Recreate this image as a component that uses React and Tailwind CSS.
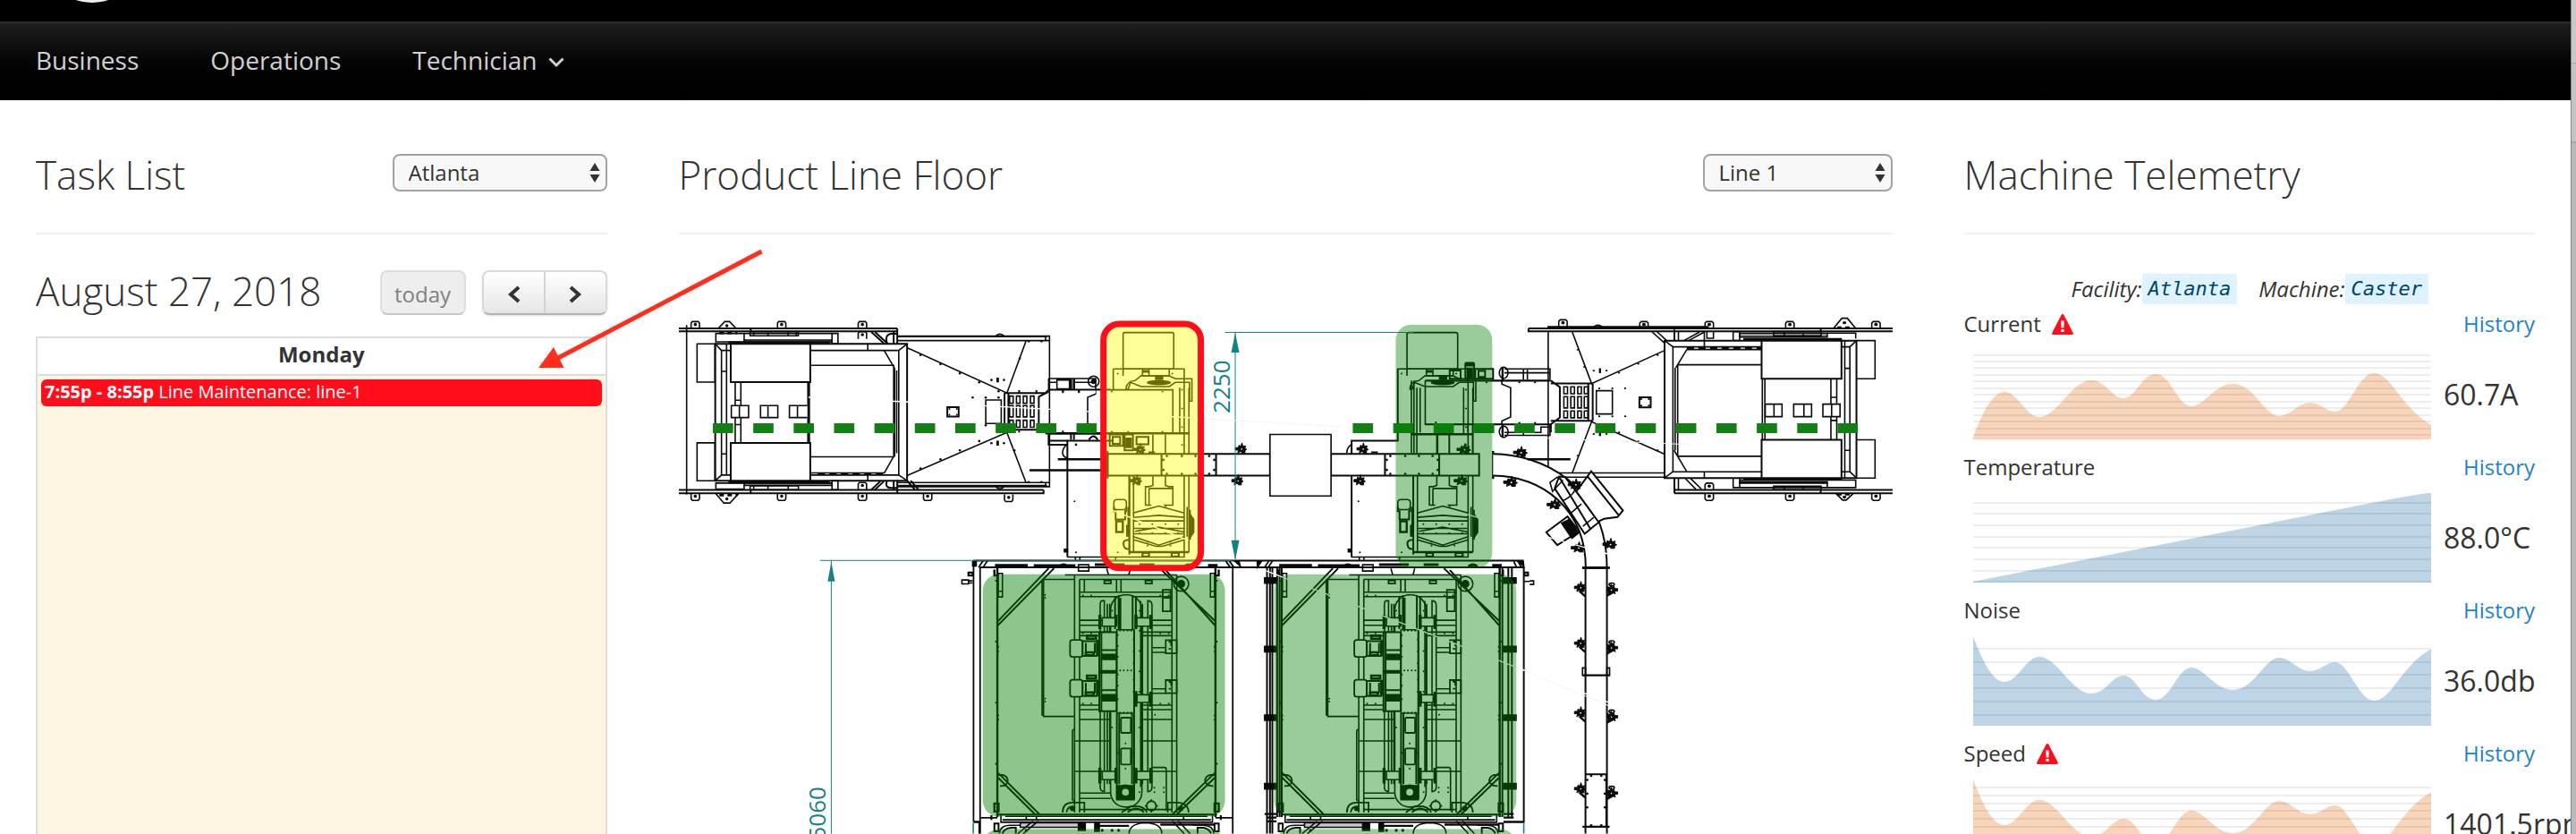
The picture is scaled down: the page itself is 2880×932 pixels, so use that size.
import React from 'react';

const INK = '#0a0a0a';
const TEAL = '#138280';

/* Drawing helpers ------------------------------------------------------- */

function Sheet({ x, y, sx = 3, children }) {
  return (
    <g
      transform={`translate(${x} ${y}) scale(${1 / sx} ${1 / 3})`}
      className="[&_*]:[vector-effect:non-scaling-stroke]"
      fill="none"
      stroke={INK}
      strokeWidth="1.6"
    >
      {children}
    </g>
  );
}

function Dots({ at, r = 3 }) {
  return at.map(([x, y], i) => <circle key={i} cx={x} cy={y} r={r} fill={INK} stroke="none" />);
}

function Boxes({ at, w, h, r = 0, fill = 'none' }) {
  return at.map(([x, y], i) => <rect key={i} x={x} y={y} width={w} height={h} rx={r} fill={fill} />);
}

function Clip({ x, y, flip = 1 }) {
  return (
    <g transform={`translate(${x} ${y}) scale(${flip} 1)`}>
      <path
        d="M-20-4H-10L-8-12L-2-8L2-20L5-8L14-10L12-2L18 2L12 6V14H2L-2 8L-12 14L-10 4H-20Z"
        fill={INK}
        strokeWidth="1"
      />
      <circle cx="1" cy="1" r="2.500" fill="#fff" stroke="none" />
    </g>
  );
}

function Brackets({ at, w = 28, h = 24, flip = false }) {
  return at.map(([x, y], i) => (
    <g key={i}>
      <path
        d={
          flip
            ? `M${x} ${y}V${y + h - 5}L${x + 4} ${y + h}H${x + w - 4}L${x + w} ${y + h - 5}V${y}`
            : `M${x} ${y + h}V${y + 5}L${x + 4} ${y}H${x + w - 4}L${x + w} ${y + 5}V${y + h}`
        }
        fill="#fff"
      />
      <circle cx={x + w / 2} cy={y + h / 2 - 2} r="3" fill={INK} />
    </g>
  ));
}

/* Machine parts --------------------------------------------------------- */

function LeftHopper() {
  return (
    <Sheet x={740} y={340}>
      <Brackets at={[[95, 58], [385, 58], [656, 58], [656, 92]]} />
      <Brackets at={[[95, 634], [385, 634], [656, 634], [875, 634], [1147, 638]]} flip />
      <Brackets at={[[656, 598]]} />
      <path d="M186 81L208 58H224L246 81M178 636L205 667H225L254 636" />
      <Dots at={[[215, 72], [215, 653]]} r={5} />
      <path d="M190 96H250M190 640H250" strokeWidth="3" strokeDasharray="5 4" />
      <path d="M80 70V638" />
      <path d="M54 81H787M54 91H787M54 623H1278M54 634H1278V623M787 81V132M295 81V92M295 623V634" strokeWidth="2" />
      <path d="M274 98H568M274 120H568V126H274ZM274 600H568V608H274Z" fill="#999" />
      <path d="M178 98H273V126H178ZM178 600H273V620H178Z" />
      <path d="M293 92H455V106H293ZM305 92V106M353 92V106M421 92V106M448 92V106M293 609H455V622H293ZM305 609V622M353 609V622M421 609V622M568 98H588V132H568ZM568 592H588V622H568Z" />
      <path d="M700 93L743 132M712 93L755 132M700 622L730 594M712 622L742 594M820 592L846 622M832 592L858 622" strokeWidth="2" />
      <path d="M775 91V132M775 592V622M787 592V634M752 130Q745 102 766 99H787M752 594Q745 616 766 616H787" strokeWidth="2" />
      <path d="M220 128H560M220 598H560" strokeWidth="2.4" />
      <path d="M115 133H175V261H115ZM115 465H175V592H115Z" />
      <rect x="176" y="133" width="644" height="459" strokeWidth="2" />
      <rect x="197" y="155" width="595" height="418" />
      <path d="M214 133V573M197 225H214M197 502H214M176 133L197 155M820 133L792 155M176 592L197 573M820 592L792 573M688 133V155M688 573V592" />
      <path d="M497 205H775V512H497M743 155L778 215M743 567L778 505M778 215V512M785 222V500M497 566H743" />
      <path d="M520 568H740" strokeWidth="2.4" strokeDasharray="8 5" />
      <path d="M228 133H495V261H228ZM228 465H495V592H228Z" fill="#fff" strokeWidth="2" />
      <path d="M487 261V465M492 261V465M243 261V465M262 261V465M243 322H262M243 404H262" />
      <path d="M230 340H288V380H230ZM257 340V380M328 340H386V380H328ZM353 340V380M485 340H425V380H485M452 340V380" fill="#fff" />
      <path d="M787 107H1298V612H787M787 122H1285M787 598H1285M1285 107V122H1298M1285 612V598H1298" />
      <path d="M790 108H1290M790 609H1290" strokeWidth="2" />
      <path d="M820 146L1155 298L1219 124M820 575L1155 430L1219 598" />
      <path d="M1118 106Q1131 94 1145 106M1118 612Q1131 626 1145 612" />
      <Dots
        at={[[865, 170], [932, 201], [997, 232], [1062, 262], [865, 551], [932, 520], [997, 490], [1062, 459], [1198, 182], [1180, 490], [1103, 254], [1145, 254], [1103, 466], [1145, 466], [1084, 313], [1127, 313], [1040, 313], [1127, 292], [1084, 406], [1228, 124], [1271, 124], [1228, 597], [1271, 597]]}
        r={4}
      />
      <path d="M1124 246V262M1124 458V474" strokeWidth="2.8" />
      <rect x="955" y="345" width="38" height="32" strokeWidth="2" />
      <Dots at={[[962, 351], [987, 351], [962, 371], [987, 371]]} />
      <rect x="1084" y="321" width="52" height="79" />
      <path d="M1147 298V430M1160 298V430" strokeWidth="2" />
      <path d="M1147 298H1284L1296 287H1500M1147 421H1262V310L1296 293" strokeWidth="2" />
      <Boxes at={[[1164, 308], [1187, 308], [1210, 308], [1234, 308], [1164, 389], [1187, 389], [1210, 389], [1234, 389]]} w={12} h={24} />
      <Boxes at={[[1164, 340], [1187, 340], [1210, 340], [1234, 340]]} w={12} h={38} />
      <path d="M1295 249H1453V287M1295 249V287M1295 262H1323V284H1365V254H1323V262M1384 262H1450" />
      <path d="M1370 250V287M1380 250V287M1284 433H1500" strokeWidth="2.6" />
      <circle cx="1446" cy="259" r="18" />
      <circle cx="1446" cy="259" r="6" fill={INK} />
      <path d="M1295 436V471H1358M1295 458H1358M1370 436V455M1380 436V455M1430 455Q1446 430 1460 455" strokeWidth="2" />
      <path d="M1455 287V300L1426 312V430" />
      <path d="M1196 288V300M1254 288V300M1343 288V298M1397 288V298M1196 424V430M1343 424V432" strokeWidth="2" />
    </Sheet>
  );
}

function Tower({ shift = 0 }) {
  return (
    <g transform={`translate(${shift} 0)`}>
      <rect x="345" y="95" width="170" height="122" rx="6" />
      <path d="M312 217H550V848H158M366 577V830H566V280M380 577V830M535 280V433M320 848V858M185 848V858M200 848V858" />
      <path d="M410 217V240M432 217V240M405 240H500V217M345 217V240" />
      <path d="M355 285Q355 258 385 256L405 240H500L520 250H576V325H568V262H520L500 276H405L370 262L362 285Z" />
      <ellipse cx="465" cy="263" rx="38" ry="6" fill={INK} />
      <path d="M452 243H480M452 250H480M410 225H430" strokeWidth="3" />
      <path d="M445 437V502M487 437V502M445 577V608L432 612H420V674H440M487 577V608L498 612H512V674H485L490 680M432 618H512M432 618V674" />
      <path d="M380 700L465 677L550 700M380 715L465 708L550 715M380 727H550M380 752H550M385 762L465 748L550 764M380 770H550M380 780L465 808L550 780M380 790L455 812H478L550 790" />
      <path d="M362 680V780M560 680V780M570 690V790" />
      <path d="M572 708L582 722V765L572 780Z" fill={INK} />
      <path d="M358 740V780M366 577V840" strokeWidth="2" />
      <rect x="314" y="655" width="42" height="34" rx="10" />
      <path d="M314 680V694H320V722H352V694H356V680" strokeWidth="2" />
      <path d="M322 728H344V764H322Z" strokeWidth="2.4" />
      <path d="M366 790Q340 790 348 812Q352 824 366 820" strokeWidth="2" />
      <path d="M366 832H566M410 834H432V846H410ZM508 834H532V846H508Z" strokeWidth="2.2" />
      <path d="M148 822H158V831H148Z" fill={INK} />
      <Dots at={[[327, 233], [510, 233], [543, 287], [543, 350], [543, 412], [543, 472], [327, 832], [187, 832], [182, 661], [400, 738], [443, 738], [487, 738], [530, 738], [400, 768], [443, 768], [487, 768], [530, 768], [427, 797], [504, 797], [427, 810], [504, 810]]} />
    </g>
  );
}

function Towers() {
  return (
    <Sheet x={1140} y={340}>
      <path d="M158 848V458H312M1112 848V458H1267V217" strokeWidth="2" />
      <path d="M158 470Q142 480 142 498Q142 512 158 516M1112 470Q1096 480 1096 498" />
      <path d="M126 520H280M31 557H280" strokeWidth="2.4" />
      <Dots at={[[187, 471]]} r={4} />
      <Tower />
      <Tower shift={953} />
      <path d="M312 287V217" />
      <path d="M255 287H512V433H255" fill="#fff" />
      <path d="M94 433H566" strokeWidth="2.6" />
      <path d="M300 437H345V475H300ZM310 445H335V468H310ZM350 437H378V490H350ZM390 445H430V470H390Z" strokeWidth="2" />
      <path d="M355 450H372V480H355Z" fill={INK} />
      <Dots at={[[307, 293], [477, 293], [307, 428], [477, 428], [143, 292], [196, 292], [362, 428]]} />
      <Clip x={402} y={487} />
      <Clip x={742} y={485} />
      <Clip x={1150} y={485} />
      <path d="M293 502H838V575H293ZM1043 502H1540V575H1043Z" fill="#fff" strokeWidth="2" />
      <path d="M474 502V575M657 502V575M1224 502V575M1406 502V575M293 492V585" strokeWidth="2" />
      <path d="M430 497H452M1178 497H1200" strokeWidth="2" />
      {[474, 1224].map((x) => (
        <Dots
          key={x}
          at={[[x + 6, 522], [x + 6, 556], [x + 18, 509], [x + 18, 569], [x + 68, 509], [x + 68, 569], [x + 114, 509], [x + 114, 569], [x + 160, 509], [x + 160, 569], [x + 177, 522], [x + 177, 556]]}
          r={4}
        />
      ))}
      <rect x="838" y="437" width="205" height="206" fill="#fff" />
      <Clip x={390} y={592} />
      <Clip x={730} y={592} />
      <Clip x={1140} y={592} />
    </Sheet>
  );
}

function RightHopper() {
  return (
    <Sheet x={1500} y={340} sx={2.45}>
      <Brackets at={[[594, 52], [816, 58], [995, 58], [1216, 58], [1452, 58]]} w={23} />
      <Brackets at={[[995, 634], [1216, 634], [1452, 634]]} w={23} flip />
      <Brackets at={[[995, 600]]} w={23} />
      <path d="M1347 81L1370 47H1385L1408 81M1353 634L1372 657H1382L1402 634M1000 91V114H1018V91" />
      <Dots at={[[1377, 62], [1377, 647]]} r={5} />
      <path d="M1357 78H1400M1357 638H1400" strokeWidth="2.4" strokeDasharray="5 4" />
      <path d="M563 77H1005" strokeWidth="2.6" />
      <path d="M511 81V91H1509M511 81H1509M911 623H1509M911 634H1509M911 85V122M911 583V634M1312 81V91M1312 623V634" strokeWidth="2" />
      <path d="M690 76Q701 64 713 76M565 91V566M631 93L684 266L884 155M631 566L684 394L884 503M565 566H884M600 580H884" />
      <path d="M1090 97H1330V110H1090ZM1090 595H1330V600H1090Z" fill="#999" />
      <path d="M1183 92H1313V106H1183ZM1212 92V106M1264 92V106M1183 610H1313V622H1183ZM1212 610V622M1264 610V622M1072 92H1090V122H1072ZM1072 583H1090V615H1072ZM1330 97H1408V115M1330 615H1408V590H1090M1090 615H1330V598M922 91V122M922 583V622" />
      <path d="M1100 117H1370M1100 587H1370" strokeWidth="2.4" />
      <path d="M850 93L884 130M864 93L890 122M993 93L950 122M980 93L937 122M940 583L970 621M954 583L985 620M993 93V143" />
      <rect x="884" y="122" width="526" height="461" fill="#fff" strokeWidth="2" />
      <rect x="907" y="143" width="485" height="419" />
      <path d="M884 122L907 143M1410 122L1392 143M884 583L907 562M1410 583L1392 562M920 203V510M913 213V490M920 203H1150M920 510H1150M945 152H1150M945 152L915 213M910 490L945 562M993 122V143M993 562V583M1378 122V583M1378 215H1392M1378 490H1392" />
      <path d="M945 148H1150" strokeWidth="2.4" strokeDasharray="8 5" />
      <path d="M1150 122H1369V250H1150ZM1150 455H1369V583H1150Z" fill="#fff" strokeWidth="2" />
      <path d="M1152 250V455M1159 250V455M1340 250V455M1356 250V455M1340 312H1356M1340 390H1356" />
      <path d="M1160 335H1206V377H1160ZM1184 335V377M1238 335H1287V377H1238ZM1266 335V377M1318 335H1365V377H1318ZM1342 335V377" fill="#fff" />
      <path d="M1410 122H1461V250H1410M1410 455H1461V583H1410" />
      <path d="M675 266V391M687 266V391M572 256L597 278V380L572 403M572 266H687M572 391H687" strokeWidth="2" />
      <Boxes at={[[608, 277], [627, 277], [646, 277], [664, 277], [608, 358], [627, 358], [646, 358], [664, 358]]} w={10} h={23} />
      <Boxes at={[[608, 310], [627, 310], [646, 310], [664, 310]]} w={10} h={38} />
      <path d="M228 256H572M228 403H572V430" strokeWidth="2.2" />
      <path d="M228 256V403H440M438 256V268L462 280V378L438 392V403" />
      <path d="M445 217H570V253M445 230H570M497 217V253M508 217V253M445 440H570V403M445 430H545V412H570M497 403V440" />
      <ellipse cx="443" cy="230" rx="12" ry="19" />
      <ellipse cx="443" cy="428" rx="12" ry="19" />
      <path d="M440 210V256M440 403V445" strokeWidth="2.4" />
      <path d="M697 290H741V368H697Z" />
      <path d="M815 312H846V346H815Z" strokeWidth="2" />
      <Dots at={[[820, 318], [841, 318], [820, 340], [841, 340], [690, 223], [725, 223], [690, 435], [725, 435], [741, 282], [776, 282], [705, 282], [741, 376], [776, 376], [705, 376], [759, 230], [812, 200], [865, 170], [759, 430], [812, 460], [865, 490], [646, 152], [664, 210], [646, 508], [257, 262], [396, 262], [257, 396], [486, 262], [529, 262], [486, 398], [529, 398]]} />
      <path d="M707 215V231M707 428V442" strokeWidth="2.4" />
      <path d="M295 222H325V250H295ZM338 200H362V250H338ZM365 217H414V250H365ZM374 224H392V244H374Z" strokeWidth="2" />
      <path d="M340 196H360V206H340ZM343 215H357V245H343Z" fill={INK} />
      <path d="M188 436H358" strokeWidth="2.6" />
      <path d="M205 280V500M214 280V430M190 256V500M197 256V500M262 440V502M294 440V502M358 403V502M345 403V430" />
      <path d="M414 492V586" strokeWidth="2.4" />
      <path d="M414 502C540 502 726 600 726 885L668 885C668 690 550 575 414 575" fill="#fff" strokeWidth="2" />
      <path d="M658 884H734M508 520H626" strokeWidth="2.6" />
      <path d="M583 618L665 770L705 730L612 580L595 578ZM597 583L680 752" fill="#fff" strokeWidth="2" />
      <path d="M570 598L590 580L604 592L577 628ZM604 660Q640 640 642 605M628 700L656 670M660 745L690 715" />
      <path d="M612 580L642 628L683 560L770 692L755 714L718 720L702 729L642 628M672 576L757 706" fill="#fff" strokeWidth="2" />
      <path d="M560 765L618 712L650 762L590 808Z" fill="#fff" strokeWidth="2" />
      <path d="M602 735L622 722L648 768L630 785Z" fill={INK} />
      <Clip x={335} y={487} />
      <Clip x={327} y={592} />
      <Clip x={490} y={497} />
      <Clip x={463} y={597} />
      <Clip x={640} y={605} />
      <Clip x={582} y={672} />
      <Clip x={735} y={805} />
      <Clip x={648} y={817} />
    </Sheet>
  );
}

function CellCore({ shift = 0 }) {
  return (
    <g transform={`translate(${shift} 0)`}>
      <path d="M703 103V940M1435 103V940" strokeWidth="2.4" />
      <path d="M875 106L705 283M893 106L705 297M1248 106L1433 282M1268 112L1433 297M705 792L845 932M705 808L830 932M1433 792L1290 932M1433 808L1305 932" strokeWidth="2" />
      <path d="M706 123H720V202H706ZM1418 123H1432V202H1418ZM706 183H720M1418 183H1432" />
      <path d="M695 96H805M825 97H965M1030 94H1130M1180 94H1230M1410 96H1442M910 100Q925 88 940 100M1330 100Q1345 88 1360 100" strokeWidth="3" />
      <path d="M975 94H1010V115H975ZM1070 106L1076 128M1150 106L1144 128" />
      <path d="M962 143H858V603H962M853 143V598H858M962 128V925M979 143V925M1289 143V925M1305 128V925M930 128H1305M979 143H1289M979 186H1289M979 201H1289M995 143V186M1103 143V186M1118 143V186" />
      <path d="M979 280H1289M979 297H1289M979 320H1289M979 332H1289M979 565H1289M979 580H1289M979 613H1289M962 685H1305M962 787H1305M979 860H1083M979 878H1083M979 915H1289M1222 372H1270M1222 388H1270M1222 510H1270M1222 525H1270M955 648H962M955 885H962M955 648V885" />
      <path d="M1062 147H1084V157H1062ZM1200 147H1222V157H1200ZM1258 178H1284V250H1258ZM1258 205H1284" strokeWidth="1.8" />
      <rect x="1083" y="195" width="105" height="712" rx="50" fill="#fff" />
      <path d="M1055 215Q1048 215 1048 230V840Q1048 855 1062 855V215ZM1208 215V855Q1222 855 1222 840V230Q1222 215 1208 215ZM1072 225V830M1080 225V830M1190 225V830M1184 215V840" />
      <path d="M1098 200V310M1110 196V310M1116 205V310M1157 196V310M1168 200V310M1104 592V882M1112 592V830M1162 312V882M1155 592V830" strokeWidth="2" />
      <path d="M1104 312H1162V592H1104Z" />
      <Dots at={[[1115, 315], [1127, 315], [1140, 315], [1152, 315], [1115, 449], [1127, 449], [1140, 449], [1152, 449], [1115, 590], [1127, 590], [1140, 590], [1152, 590], [1107, 330], [1107, 366], [1107, 403], [1107, 462], [1107, 500], [1107, 545], [1160, 345], [1160, 385], [1160, 425], [1160, 480], [1160, 520], [1133, 693], [1133, 778], [1108, 725], [1160, 725], [1180, 315], [1180, 383], [1180, 452], [1180, 520], [1180, 640], [1088, 640], [1088, 248], [1180, 248], [1180, 857], [1232, 597], [1230, 842], [1262, 842], [1230, 857], [1262, 857]]} />
      <Dots at={[[863, 195], [863, 205], [863, 543], [863, 553], [990, 197], [1018, 197], [1250, 197], [1278, 197], [990, 324], [1018, 324], [1250, 324], [1278, 324], [990, 560], [1018, 560], [1250, 560], [1278, 560], [698, 148], [1440, 148], [698, 352], [1440, 352], [698, 557], [1440, 557], [698, 762], [1440, 762], [706, 370], [706, 385], [706, 600], [706, 614], [1432, 370], [1432, 385], [1432, 600], [1432, 614]]} />
      <Boxes at={[[1055, 272], [1170, 272], [1055, 787], [1170, 787]]} w={46} h={28} fill="#fff" />
      <rect x="1172" y="530" width="40" height="26" fill="#fff" />
      <path d="M1047 262V310M1101 262V300M1168 262V310M1218 262V310M1047 775V828M1101 775V828M1168 775V828M1218 775V828M1168 518V570M1218 520V570" strokeWidth="3.4" />
      <path d="M1045 320H1103V450H1045ZM1052 320V450M1052 380H1103M1045 456H1103V585H1045ZM1052 456V585M1052 515H1103M1052 550H1103" fill="#fff" strokeWidth="2" />
      <path d="M1055 395H1100V412H1055ZM1055 530H1100V546H1055Z" fill={INK} />
      {[346, 480].map((y) => (
        <g key={y}>
          <rect x="947" y={y} width="42" height="57" rx="8" fill="#fff" strokeWidth="1.8" />
          <path d={`M989 ${y + 4}H1037V${y + 54}H989ZM1000 ${y + 10}V${y + 45}M1030 ${y + 10}V${y + 45}`} fill="#fff" strokeWidth="2" />
          <path d={`M1004 ${y - 14}H1034V${y - 4}H1004ZM1000 ${y + 42}H1026V${y + 52}H1000Z`} strokeWidth="2.6" />
          <path d={`M1040 ${y}V${y + 54}`} strokeWidth="3" />
          <path d={`M1268 ${y + 1}H1305V${y + 45}H1268ZM1278 ${y + 8}L1286 ${y + 4}V${y + 20}M1278 ${y + 30}H1286`} strokeWidth="1.8" />
        </g>
      ))}
      <rect x="1118" y="607" width="33" height="51" rx="4" fill="#fff" strokeWidth="1.8" />
      <rect x="1118" y="710" width="33" height="54" rx="4" fill="#fff" strokeWidth="1.8" />
      <path d="M1104 835H1162V882H1104Z" fill={INK} />
      <circle cx="1133" cy="857" r="24" fill={INK} />
      <circle cx="1133" cy="857" r="14" fill="#fff" />
      <path d="M1222 774H1264Q1270 774 1270 782V920" />
      <circle cx="1220" cy="903" r="16" strokeWidth="1.8" />
      <path d="M1198 903H1204M1236 903H1242M1220 881V887M1220 919V925" />
      <circle cx="1320" cy="158" r="25" />
      <circle cx="1320" cy="158" r="11" fill={INK} />
      <path d="M706 800Q735 795 738 818Q735 838 712 836M1433 800Q1402 795 1400 818Q1404 838 1428 836M922 925Q922 892 955 892H995V925M935 925Q937 905 958 905M1275 925V892H1310Q1345 896 1345 925M1120 925L1150 905H1180Q1200 910 1205 925M1140 925Q1170 900 1195 925" strokeWidth="1.8" />
      <Dots at={[[955, 912], [1318, 912]]} r={9} />
      <path d="M693 895H707V922H693ZM1432 895H1446V922H1432ZM693 110V130H706M1446 110V130H1433" strokeWidth="2.4" />
      <path d="M700 932H1440M720 950H1420" strokeWidth="2.2" />
      <path d="M715 930V958H1425V930M730 938H1408M800 937V950M834 937V950M1328 937V950" />
      <path d="M780 960H990V975H780Z" fill="#c9c6d0" />
      <path d="M975 960H998V985H975ZM1030 960H1045V988H1030Z" fill={INK} />
      <path d="M1045 970H1145M1250 966H1430" strokeWidth="2.4" />
      <path d="M840 954L790 996M822 954L772 996M1290 954L1330 996M1310 954L1350 996M1145 996Q1145 962 1200 960Q1255 962 1255 996M710 996Q712 968 745 968H780M1360 968H1395Q1428 970 1430 996" />
      <path d="M720 996Q725 978 750 976H765V996M1375 996V976H1395Q1415 980 1420 996M693 962H707V988H693ZM1432 962H1446V988H1432Z" strokeWidth="2" />
      <Dots at={[[1055, 985], [1088, 985], [1110, 985], [800, 985]]} r={5} />
    </g>
  );
}

function Cells() {
  return (
    <Sheet x={880} y={600}>
      <path d="M623 80H2467L2470 103H645" strokeWidth="2" />
      <path d="M623 80V957M645 103V996M1493 103V996M645 943H703M1435 943H1493" strokeWidth="1.8" />
      <path d="M623 957H643V996" strokeWidth="2.4" />
      <path d="M640 103L655 80M655 103L670 80M1470 82L1485 103M1482 82L1497 103M1600 103L1614 82M1612 103L1626 82M2436 82L2446 103M2450 82L2462 103" strokeWidth="1.8" />
      <path d="M620 84H632V98H620ZM1500 82L1518 98L1514 82ZM1575 82L1590 82L1576 102ZM2452 84H2468V98Z" fill={INK} />
      <path d="M584 145H606V158H584ZM606 148H620M606 155H620M2490 148H2503V160H2490M2470 150H2490" />
      <path d="M606 120H620V130H606ZM2472 120H2484V130H2472ZM683 934V950M1453 934V950" strokeWidth="2.2" />
      <CellCore />
      <CellCore shift={954} />
      <path d="M1608 103V996M1618 103V996M1626 103V996M1642 103V940M1650 103V940M2398 103V940M2418 103V940M2430 103V940M2470 103V960" strokeWidth="2" />
      {[138, 368, 598, 828].map((y) => (
        <path key={y} d={`M1600 ${y}H1640V${y + 18}H1600ZM2402 ${y}H2444V${y + 18}H2402Z`} fill={INK} />
      ))}
      <path d="M1600 930H1640M1608 942H1640M1608 955H1640M2402 930H2436M2402 942H2436M2402 957H2470" strokeWidth="2.4" />
      <path d="M622 960V996M2470 962V996" stroke={TEAL} />
    </Sheet>
  );
}

function Conveyor() {
  const clips = [[1280, 170], [1280, 357], [1280, 590], [1280, 845]];
  const twins = [[1385, 178], [1385, 372], [1385, 604], [1385, 860]];
  return (
    <Sheet x={1340} y={600}>
      <path d="M1297 104V996M1369 104V996M1297 797H1367V973H1297" strokeWidth="2" />
      <path d="M1287 104H1378M1287 465H1378M1287 973H1378" strokeWidth="2.2" />
      <path d="M1287 440H1297V465H1287ZM1369 440H1378V465H1369Z" />
      {clips.map(([x, y]) => (
        <g key={y}>
          <Clip x={x} y={y} />
          <path d={`M${x - 4} ${y + 12}L${x + 16} ${y + 30}`} strokeWidth="2.4" />
        </g>
      ))}
      {twins.map(([x, y]) => (
        <g key={y}>
          <Clip x={x} y={y} flip={-1} />
          <ellipse cx={x} cy={y - 18} rx="9" ry="5" />
          <path d={`M${x - 16} ${y + 20}L${x + 6} ${y + 8}`} strokeWidth="2.4" />
        </g>
      ))}
      <Dots at={[[1316, 802], [1350, 802], [1303, 816], [1362, 816], [1303, 862], [1362, 862], [1303, 908], [1362, 908], [1316, 968], [1350, 968]]} r={4} />
    </Sheet>
  );
}

function Dimensions() {
  return (
    <g stroke={TEAL} strokeWidth="1" fill={TEAL}>
      <path d="M1369 371.500H1580M916 626.500H1378M1380.500 372V625M928.500 627V932" fill="none" />
      <path d="M1380.500 372L1385 394H1376ZM1380.500 626L1385 604H1376ZM928.500 628L932.500 650H924.500Z" stroke="none" />
      <g className="font-['Open_Sans',sans-serif] text-[26px]" stroke="none">
        <text transform="translate(1374 462) rotate(-90)">2250</text>
        <text transform="translate(922 939) rotate(-90)">5060</text>
      </g>
    </g>
  );
}

function FloorPlan() {
  return (
    <svg viewBox="758 350 1358 582" className="block w-full" role="img" aria-label="Line 1 floor plan">
      <LeftHopper />
      <Towers />
      <RightHopper />
      <Cells />
      <Conveyor />
      <Dimensions />
      <path d="M903 444Q1150 455 1330 467M1242 570L1328 604M1640 575L1800 620M1415 638L1700 748L1800 786" fill="none" stroke="#fff" strokeWidth="1.4" />
      <path d="M1330 467L1500 477M1688 488L1890 497M1700 748L1815 796" fill="none" stroke="#f7f2f7" strokeWidth="1" />
      <path d="M796 478.500H1228" stroke="#128012" strokeWidth="11" strokeDasharray="22.700 22.500" />
      <path d="M1512 478.500H2078" stroke="#128012" strokeWidth="11" strokeDasharray="22.700 22.500" />
      <rect x="1233" y="362" width="109" height="273" rx="18" fill="#ff0" fillOpacity="0.4" stroke="#ff0d1b" strokeWidth="7" />
      <rect x="1560" y="363" width="108" height="272" rx="17" fill="#008000" fillOpacity="0.4" />
      <rect x="1098" y="642" width="271" height="271" rx="18" fill="#008000" fillOpacity="0.45" />
      <rect x="1424" y="642" width="271" height="271" rx="18" fill="#008000" fillOpacity="0.4" />
      <rect x="1098" y="927" width="271" height="271" rx="18" fill="#008000" fillOpacity="0.45" />
      <rect x="1424" y="927" width="271" height="271" rx="18" fill="#008000" fillOpacity="0.4" />
    </svg>
  );
}

/* Telemetry ------------------------------------------------------------- */

const WAVE_UP =
  'M0 98C12 66 23 47 35 47C50 47 59 75 74 75C94 75 110 34 132 34C148 34 155 54 168 54C182 54 188 27 204 27C221 27 228 63 244 63C258 63 270 38 290 38C314 38 325 74 342 74C354 74 363 59 376 59C388 59 394 69 404 69C420 69 430 26 448 26C462 26 474 50 485 61C494 72 503 79 512 84V100H0Z';
const WAVE_DOWN =
  'M0 0C12 32 23 51 35 51C50 51 59 23 74 23C94 23 110 64 132 64C148 64 155 44 168 44C182 44 188 71 204 71C221 71 228 35 244 35C258 35 270 60 290 60C314 60 325 24 342 24C354 24 363 39 376 39C388 39 394 29 404 29C420 29 430 72 448 72C462 72 474 48 485 37C494 26 503 19 512 14V100H0Z';
const RAMP = 'M0 99L440 12Q480 4 508 0H512V100H0Z';

const METRICS = [
  { name: 'Current', value: '60.7A', alert: true, color: '#f7d4ba', shape: WAVE_UP, lines: [6, 13, 20, 28, 35, 43, 50, 58, 65, 73, 80, 88, 95] },
  { name: 'Temperature', value: '88.0°C', alert: false, color: '#bdd5e7', shape: RAMP, lines: [11, 23, 36, 49, 61, 74, 87, 99] },
  { name: 'Noise', value: '36.0db', alert: false, color: '#bdd5e7', shape: WAVE_DOWN, lines: [14, 29, 43, 58, 73, 88] },
  { name: 'Speed', value: '1401.5rpm', alert: true, color: '#f7d4ba', shape: WAVE_DOWN, lines: [9, 18, 27, 35, 44, 53, 62, 70, 79, 88, 97] },
];

function WarningIcon() {
  return (
    <svg viewBox="0 0 24 23" className="h-[23px] w-6" role="img" aria-label="Warning">
      <path d="M12 0Q13 0 13.600 1.200L23.700 21Q24.400 23 22.500 23H1.500Q-.4 23 .3 21L10.400 1.200Q11 0 12 0Z" fill="#ff0d1b" />
      <path d="M10.200 7.500H13.800L13.400 15.500H10.600ZM10.400 17H13.600V20H10.400Z" fill="#fff" />
    </svg>
  );
}

function Metric({ metric }) {
  return (
    <div className="h-40">
      <div className="flex h-9 items-center justify-between">
        <h3 className="flex items-center gap-3">
          {metric.name}
          {metric.alert && <WarningIcon />}
        </h3>
        <a href="#history" className="text-[#1d82cb]">History</a>
      </div>
      <div className="mt-[11px] flex items-center gap-3.5 pl-2.5">
        <svg viewBox="0 0 512 100" preserveAspectRatio="none" className="h-[100px] min-w-0 flex-1">
          <path d={metric.shape} fill={metric.color} />
          {metric.lines.map((y) => (
            <rect key={y} x="0" y={y - 1} width="512" height="2" fill="#000" fillOpacity="0.07" />
          ))}
        </svg>
        <span className="w-[102px] text-[32px] leading-10 whitespace-nowrap">{metric.value}</span>
      </div>
    </div>
  );
}

/* Page ------------------------------------------------------------------ */

function Picker({ label, options, className }) {
  return (
    <div className={`relative mt-1.5 ${className}`}>
      <select
        aria-label={label}
        className="block h-[42px] w-full appearance-none rounded-lg border-2 border-[#a2a2a2] bg-[#f8f8f8] px-4 text-2xl leading-8"
      >
        {options.map((o) => (
          <option key={o}>{o}</option>
        ))}
      </select>
      <svg viewBox="0 0 12 22" className="pointer-events-none absolute top-2.5 right-2 h-[22px] w-3" fill="#333">
        <path d="M6 0L11.500 9H.5ZM6 22L11.500 13H.5Z" />
      </svg>
    </div>
  );
}

function SectionHeader({ title, children }) {
  return (
    <div className="flex h-24 items-start justify-between border-b-2 border-[#f1f1f1]">
      <h1 className="text-[44px] leading-[58px] font-light whitespace-nowrap">{title}</h1>
      {children}
    </div>
  );
}

function Fact({ label, value }) {
  return (
    <span className="flex items-center italic">
      {label}:
      <code className="flex h-[34px] items-center rounded-xs bg-[#def3ff] px-[7px] font-['DejaVu_Sans_Mono',monospace] text-[22px] text-[#004368]">
        {value}
      </code>
    </span>
  );
}

function ArrowButton({ label, path, className }) {
  return (
    <button type="button" aria-label={label} className={`flex flex-1 items-center justify-center ${className}`}>
      <svg viewBox="0 0 15 20" className="mt-1 h-5 w-[15px]" fill="none" stroke="#333" strokeWidth="4">
        <path d={path} />
      </svg>
    </button>
  );
}

function TaskList() {
  return (
    <section className="relative min-w-0 px-10 pt-[54px]">
      <SectionHeader title="Task List">
        <Picker label="Facility" options={['Atlanta']} className="w-60" />
      </SectionHeader>
      <div className="flex items-start pt-10">
        <h2 className="flex-1 text-[44px] leading-[46px] font-light whitespace-nowrap">August 27, 2018</h2>
        <button
          type="button"
          disabled
          className="h-[50px] w-24 rounded-lg border-2 border-[#dedede] border-b-[#c6c6c6] bg-[#eee] pt-1 text-2xl text-[#808080]"
        >
          today
        </button>
        <div className="ml-[18px] flex h-[50px] w-[140px] rounded-lg border-2 border-[#d9d9d9] border-b-[#b3b3b3] bg-linear-to-b from-white to-[#e6e6e6] shadow-sm">
          <ArrowButton label="Previous day" path="M13 2L4 10L13 18" className="border-r-2 border-[#d4d4d4]" />
          <ArrowButton label="Next day" path="M2 2L11 10L2 18" className="" />
        </div>
      </div>
      <table className="mt-6 w-full border-collapse">
        <thead>
          <tr>
            <th className="h-[42px] border-2 border-[#ddd] p-0 pb-1 leading-8 font-bold">Monday</th>
          </tr>
        </thead>
        <tbody>
          <tr>
            <td className="h-[640px] border-2 border-[#ddd] bg-[#fdf6e2] px-1 pt-1 align-top">
              <a href="#task" className="block h-[30px] rounded-md bg-[#ff0d1b] px-1 text-[20px] leading-7 whitespace-nowrap text-white">
                <b>7:55p - 8:55p</b> Line Maintenance: line-1
              </a>
            </td>
          </tr>
        </tbody>
      </table>
      <svg viewBox="602 278 252 134" className="pointer-events-none absolute top-[166px] left-[602px] z-10 h-[134px] w-[252px]">
        <path d="M851.500 281L624 400" stroke="#ff2d1c" strokeWidth="5" />
        <path d="M602 411L619 388L630.500 411Z" fill="#ff2d1c" />
      </svg>
    </section>
  );
}

export default function App() {
  return (
    <div className="flex h-screen overflow-hidden bg-white font-['Open_Sans',sans-serif] text-2xl text-[#333]">
      <div className="min-w-0 flex-1 overflow-hidden">
        <header className="bg-black text-[28px] text-[#d1d1d1]">
          <div className="h-6 overflow-hidden pl-[72px]">
            <svg viewBox="0 0 64 24" className="h-6 w-16">
              <ellipse cx="31" cy="-12" rx="30" ry="15" fill="#eee" />
            </svg>
          </div>
          <nav className="flex h-[88px] items-center gap-20 border-t-2 border-[#2b2b2b] bg-linear-to-b from-[#1f1f1f] to-black px-10 pb-0.5">
            <a href="#business">Business</a>
            <a href="#operations">Operations</a>
            <a href="#technician" className="flex items-center gap-3">
              Technician
              <svg viewBox="0 0 18 12" className="mt-1 h-3 w-[18px]" fill="none" stroke="#d1d1d1" strokeWidth="3">
                <path d="M1.500 1.500L9 9L16.500 1.500" />
              </svg>
            </a>
          </nav>
        </header>
        <main className="grid grid-cols-[1fr_2fr_1fr]">
          <TaskList />
          <section className="min-w-0 px-10 pt-[54px]">
            <SectionHeader title="Product Line Floor">
              <Picker label="Line" options={['Line 1']} className="w-[212px]" />
            </SectionHeader>
            <div className="pt-[88px]">
              <FloorPlan />
            </div>
          </section>
          <section className="min-w-0 px-10 pt-[54px]">
            <SectionHeader title="Machine Telemetry" />
            <div className="flex justify-end gap-6 pt-11 pr-[119px] pb-1">
              <Fact label="Facility" value="Atlanta" />
              <Fact label="Machine" value="Caster" />
            </div>
            {METRICS.map((m) => (
              <Metric key={m.name} metric={m} />
            ))}
          </section>
        </main>
      </div>
      <div className="flex w-1.5 flex-col border-l border-[#858585] bg-[#b9b9b9]">
        <div className="h-[71px] border-b border-[#a5a5a5] bg-[#c8c8c8]" />
        <div className="h-[89px] border-b-2 border-[#a5a5a5] bg-[#c4c4c4]" />
      </div>
    </div>
  );
}
